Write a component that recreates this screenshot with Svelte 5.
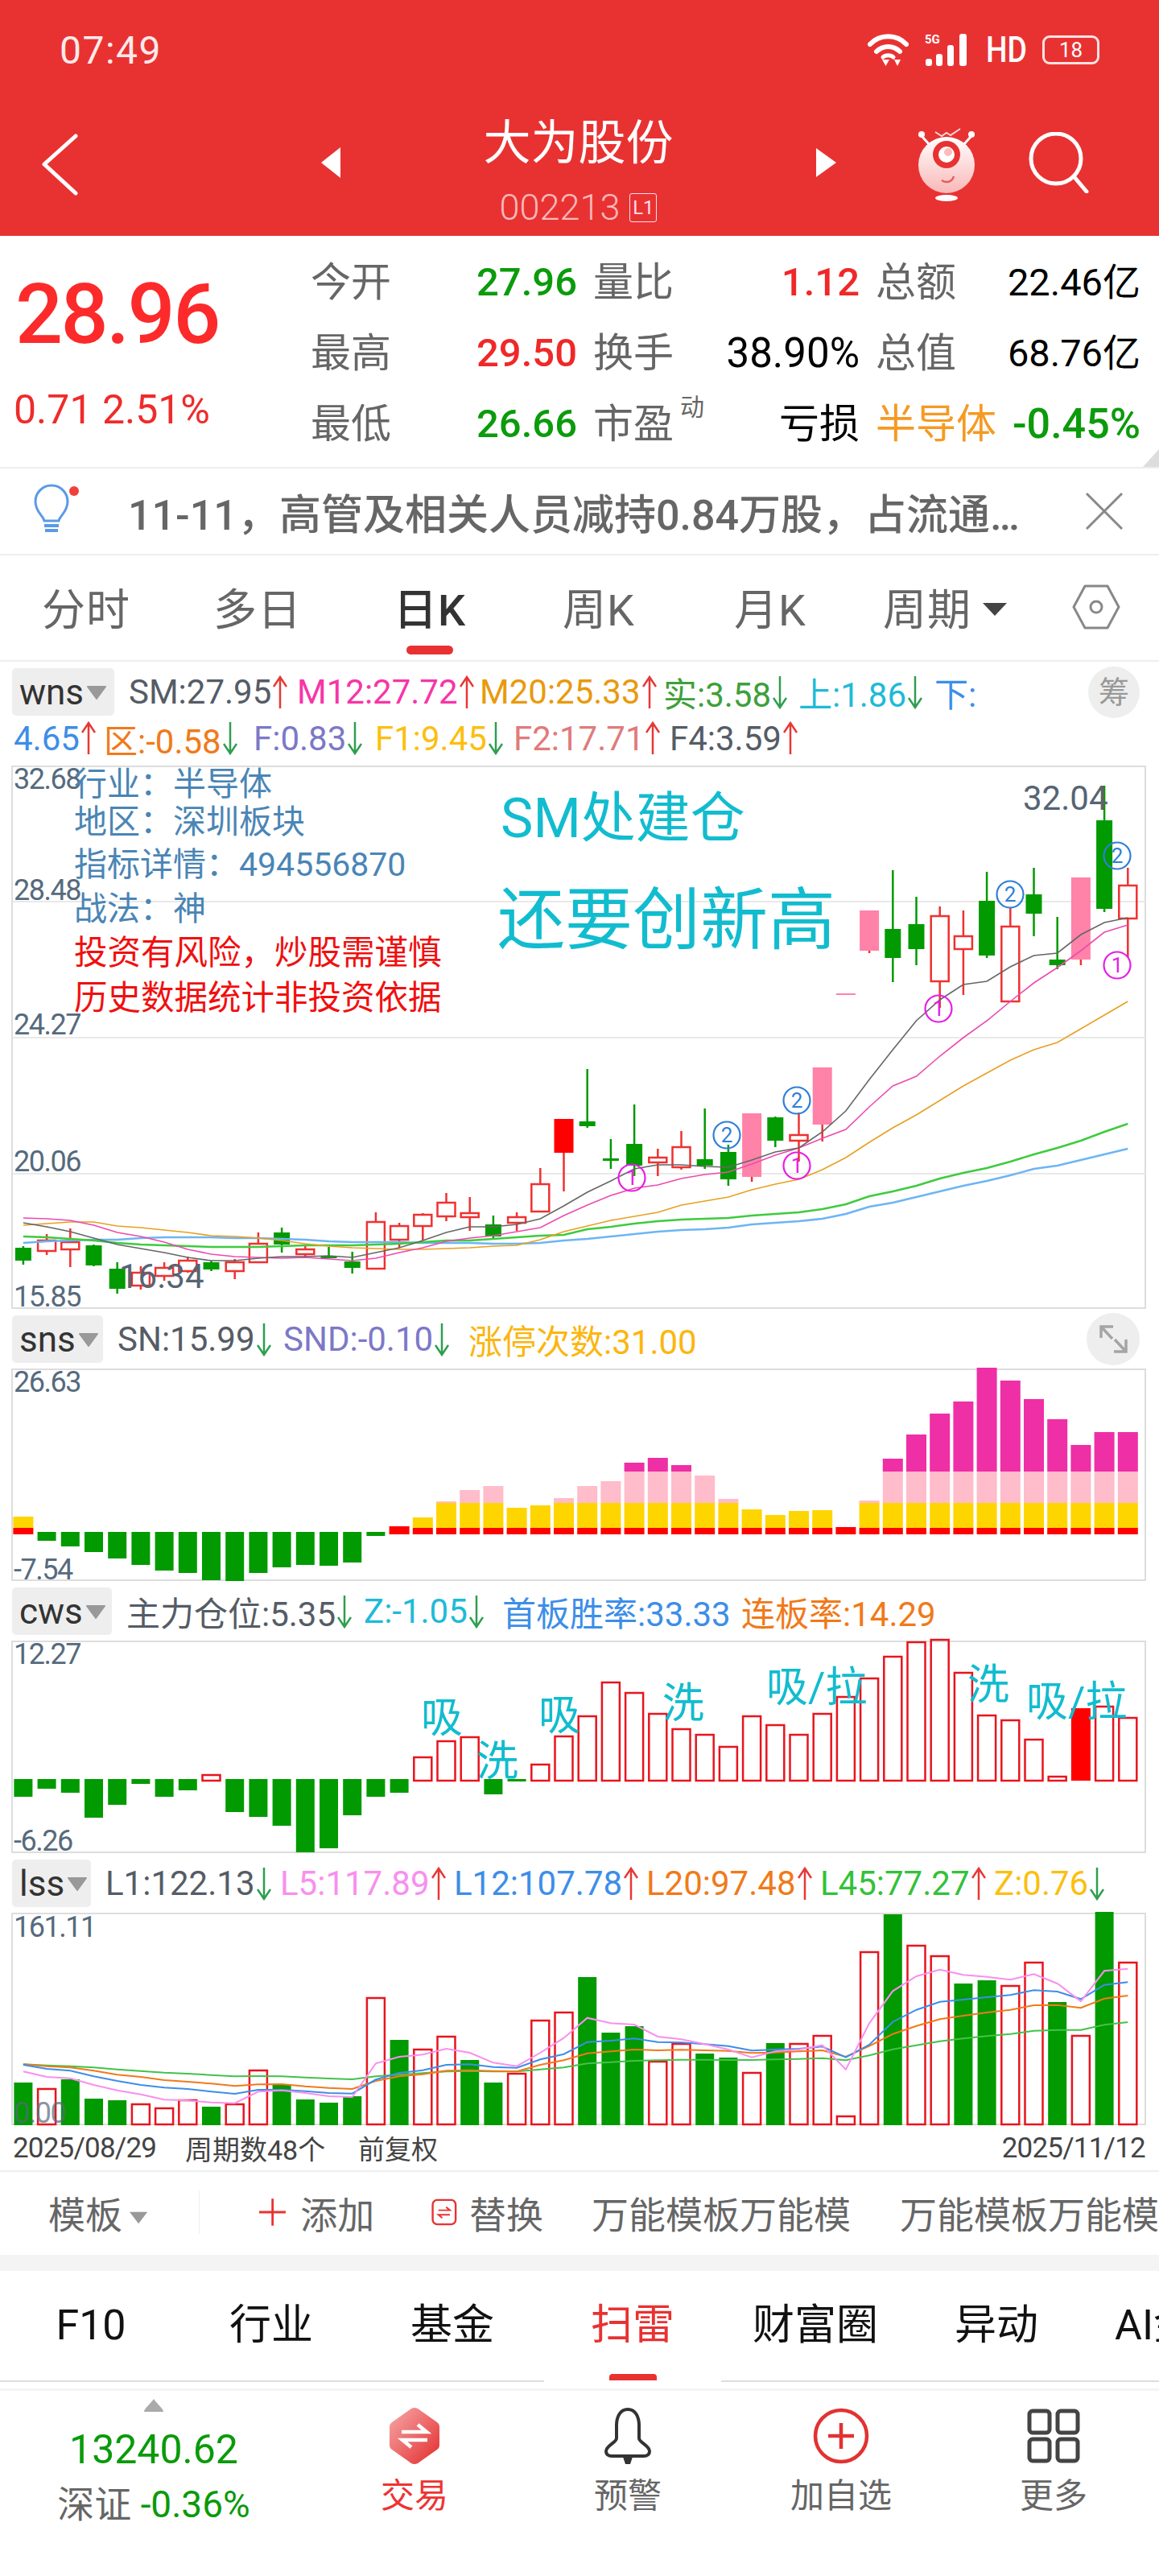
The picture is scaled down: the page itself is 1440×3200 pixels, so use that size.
<script>
  // Stock detail screen: daily K-line chart with three indicator panes below it.
  // All chart data is in page pixels, each svg's viewBox starts at its own top.
  const cx = (i) => 28.9 + i * 29.2;
  const pts = (ys) => ys.map((y, i) => `${cx(i).toFixed(1)},${y.toFixed(1)}`).join(" ");

  // kind, body top, body bottom, wick top, wick bottom
  // g = green, r = hollow red, p = pink, f = filled red
  const candles = [
    ["g",1552,1568,1550,1573],["r",1543,1556,1535,1561],["r",1545,1554,1528,1576],["g",1549,1574,1548,1575],
    ["g",1578,1603,1570,1609],["r",1583,1599,1575,1604],["r",1577,1587,1570,1593],["r",1568,1581,1563,1583],
    ["g",1570,1579,1568,1581],["r",1570,1581,1566,1591],["r",1547,1570,1533,1571],["g",1533,1548,1527,1558],
    ["r",1554,1560,1548,1563],["g",1562,1565,1551,1565],["g",1569,1577,1557,1584],["r",1520,1578,1508,1578],
    ["r",1525,1542,1521,1552],["r",1511,1525,1509,1543],["r",1496,1513,1484,1519],["r",1509,1514,1489,1531],
    ["g",1523,1538,1512,1542],["r",1514,1521,1508,1531],["r",1473,1507,1453,1508],["f",1392,1434,1392,1482],
    ["g",1395,1401,1330,1403],["g",1441,1444,1417,1454],["g",1423,1450,1374,1463],["r",1440,1446,1429,1463],
    ["r",1427,1452,1407,1455],["g",1442,1450,1379,1454],["g",1433,1467,1424,1475],["p",1385,1464,1385,1470],
    ["g",1390,1419,1389,1427],["r",1412,1419,1384,1445],["p",1328,1399,1328,1420],["p",1236,1238,1236,1238],
    ["p",1133,1183,1133,1186],["g",1156,1192,1083,1222],["g",1150,1181,1116,1201],["r",1140,1221,1128,1254],
    ["r",1165,1181,1133,1238],["g",1121,1189,1085,1192],["r",1153,1246,1129,1246],["g",1113,1137,1080,1165],
    ["g",1194,1201,1141,1206],["p",1092,1194,1092,1201],["g",1021,1131,978,1135],["r",1102,1143,1080,1191],
  ];
  const bodyW = { g: 20, r: 22, p: 24, f: 24 };
  const bodyC = { g: "#019a01", r: "#ef3131", p: "#ff82a8", f: "#ff0000" };

  const maLines = [
    { c: "#6cb5f5", w: 2.5, ys: [1546,1544,1543,1542,1542,1540,1539,1539,1539,1540,1540,1541,1542,1544,1545,1545,1545,1546,1546,1546,1547,1547,1546,1543,1541,1538,1535,1532,1530,1529,1527,1523,1521,1519,1516,1510,1501,1496,1489,1482,1475,1469,1462,1454,1450,1443,1436,1429] },
    { c: "#3ecb3e", w: 2.5, ys: [1538,1539,1541,1543,1546,1548,1549,1550,1551,1551,1551,1550,1549,1549,1549,1548,1547,1545,1543,1543,1541,1539,1537,1536,1529,1526,1522,1519,1517,1516,1515,1512,1510,1508,1504,1498,1488,1482,1475,1466,1459,1453,1445,1436,1428,1419,1408,1398] },
    { c: "#e8a020", w: 1.6, ys: [1524,1522,1520,1520,1525,1527,1530,1533,1537,1538,1540,1543,1547,1550,1552,1553,1554,1554,1553,1552,1550,1549,1542,1532,1525,1518,1513,1508,1499,1494,1489,1480,1473,1467,1455,1440,1421,1403,1387,1369,1351,1335,1319,1306,1297,1280,1263,1246] },
    { c: "#ec4bb0", w: 1.6, ys: [1515,1516,1518,1524,1533,1538,1545,1554,1560,1563,1564,1565,1564,1566,1568,1565,1558,1552,1544,1540,1537,1532,1527,1512,1499,1487,1478,1474,1466,1461,1458,1448,1437,1428,1416,1405,1377,1351,1339,1314,1291,1270,1246,1223,1204,1183,1160,1151] },
    { c: "#666666", w: 1.6, ys: [1521,1526,1532,1540,1548,1553,1558,1564,1568,1568,1565,1563,1563,1562,1564,1558,1552,1543,1533,1526,1526,1523,1516,1500,1483,1469,1454,1449,1449,1451,1452,1443,1433,1428,1408,1382,1343,1306,1270,1244,1225,1221,1203,1189,1186,1163,1148,1142] },
  ];

  const marks = [
    { n: "1", x: 785, y: 1465, c: "#e61ee6" }, { n: "1", x: 990, y: 1450, c: "#e61ee6" },
    { n: "1", x: 1166, y: 1255, c: "#e61ee6" }, { n: "1", x: 1388, y: 1201, c: "#e61ee6" },
    { n: "2", x: 903, y: 1412, c: "#2e7fd8" }, { n: "2", x: 990, y: 1369, c: "#2e7fd8" },
    { n: "2", x: 1255, y: 1113, c: "#2e7fd8" }, { n: "2", x: 1388, y: 1065, c: "#2e7fd8" },
  ];

  // sns pane: stacked levels, value is the top of the column
  const snsTops = [1885,0,0,0,0,0,0,0,0,0,0,0,0,0,0,0,1897,1886,1866,1852,1847,1874,1871,1862,1847,1841,1818,1812,1821,1834,1863,1876,1883,1878,1877,1898,1865,1813,1783,1757,1742,1700,1716,1739,1764,1796,1780,1780];
  const snsDown = { 1:1915,2:1922,3:1929,4:1937,5:1945,6:1952,7:1955,8:1964,9:1965,10:1955,11:1948,12:1945,13:1946,14:1942,15:1909 };
  function stack(t) {
    if (t >= 1890) return [{ y: t, b: 1907, c: "#ff0000" }];
    const out = [{ y: 1899, b: 1907, c: "#ff0000" }, { y: Math.max(t, 1868), b: 1899, c: "#ffd500" }];
    if (t < 1868) out.push({ y: Math.max(t, 1829), b: 1868, c: "#ffbccb" });
    if (t < 1829) out.push({ y: t, b: 1829, c: "#ee2fa5" });
    return out;
  }

  // cws pane: above zero is hollow red, below zero is green
  const cws = [2233,2223,2228,2259,2243,2217,2233,2225,2206,2252,2258,2269,2302,2297,2256,2233,2228,2184,2164,2159,2230,2214,2193,2158,2133,2091,2104,2130,2149,2156,2171,2133,2144,2156,2130,2109,2086,2059,2041,2038,2079,2132,2138,2162,2208,2123,2121,2135];
  const cwsNotes = [
    { t: "吸", x: 523, y: 2153 }, { t: "洗", x: 592, y: 2207 }, { t: "吸", x: 669, y: 2150 },
    { t: "洗", x: 823, y: 2135 }, { t: "吸/拉", x: 952, y: 2115 }, { t: "洗", x: 1202, y: 2112 },
    { t: "吸/拉", x: 1275, y: 2133 },
  ];

  // lss pane
  const lssKinds = "GRGGGRRRGRRGGGGRGRRGGRRRGGGRRGGRGRRRRGRRGGRRGRGR";
  const lssTops = [2587,2595,2583,2607,2609,2614,2619,2609,2617,2614,2572,2589,2608,2612,2604,2482,2534,2546,2530,2559,2587,2576,2510,2500,2456,2525,2517,2561,2539,2551,2556,2575,2538,2539,2529,2629,2425,2378,2417,2430,2464,2460,2467,2438,2487,2529,2375,2438];
  const lssY = (v) => 2300 + v / 3;
  const lssLines = [
    { c: "#43c24a", ys: [793,797,800,805,812,818,824,828,833,838,837,838,842,846,849,838,832,826,820,818,820,820,812,805,790,785,780,778,776,776,777,777,775,773,770,778,760,737,722,707,697,688,680,668,665,665,646,636].map(lssY) },
    { c: "#f07a1a", ys: [793,800,805,817,832,840,852,858,865,874,868,867,875,881,885,855,838,830,817,815,818,820,795,778,752,745,738,741,739,741,743,751,749,745,741,765,725,680,650,625,612,600,590,573,572,583,548,537].map(lssY) },
    { c: "#3d8ee8", ys: [795,810,817,838,855,870,880,885,895,903,888,888,893,900,902,850,825,815,795,793,803,806,775,755,710,705,697,710,712,718,725,742,738,735,727,767,720,635,590,560,552,543,535,517,522,550,497,487].map(lssY) },
    { c: "#f98fee", ys: [820,840,845,870,890,905,925,928,935,938,895,890,900,912,915,790,765,757,735,750,787,800,750,695,620,640,645,690,700,718,738,767,745,738,722,812,640,520,465,440,460,467,478,457,492,558,445,437].map(lssY) },
  ];

  const wnsRow1 = [
    { t: "SM:27.95", c: "#555c66", w: 209, a: "up" }, { t: "M12:27.72", c: "#f735a8", w: 227, a: "up" },
    { t: "M20:25.33", c: "#e89a0c", w: 228, a: "up" }, { t: "实:3.58", c: "#3ea03a", w: 168, a: "down" },
    { t: "上:1.86", c: "#1ebbd7", w: 169, a: "down" }, { t: "下:", c: "#3d8ee8" },
  ];
  const wnsRow2 = [
    { t: "4.65", c: "#3d8ee8", w: 112, a: "up" }, { t: "区:-0.58", c: "#f07a1a", w: 186, a: "down" },
    { t: "F:0.83", c: "#7c78c8", w: 151, a: "down" }, { t: "F1:9.45", c: "#fbbf0f", w: 172, a: "down" },
    { t: "F2:17.71", c: "#e07b7b", w: 194, a: "up" }, { t: "F4:3.59", c: "#555c66", a: "up" },
  ];
  const snsRow = [
    { t: "SN:15.99", c: "#555c66", w: 206, a: "down" }, { t: "SND:-0.10", c: "#7c78c8", w: 230, a: "down" },
    { t: "涨停次数:31.00", c: "#fbb60f" },
  ];
  const cwsRow = [
    { t: "主力仓位:5.35", c: "#555c66", w: 295, a: "down" }, { t: "Z:-1.05", c: "#1ebbd7", w: 172, a: "down" },
    { t: "首板胜率:33.33", c: "#3d8ee8", w: 297 }, { t: "连板率:14.29", c: "#f07a1a" },
  ];
  const lssRow = [
    { t: "L1:122.13", c: "#555c66", w: 217, a: "down" }, { t: "L5:117.89", c: "#f98fee", w: 216, a: "up" },
    { t: "L12:107.78", c: "#3d8ee8", w: 239, a: "up" }, { t: "L20:97.48", c: "#f07a1a", w: 216, a: "up" },
    { t: "L45:77.27", c: "#33c13a", w: 216, a: "up" }, { t: "Z:0.76", c: "#fbbf0f", a: "down" },
  ];

  const periodTabs = ["分时", "多日", "日K", "周K", "月K"];
  const lowerTabs = ["F10", "行业", "基金", "扫雷", "财富圈", "异动"];
</script>

{#snippet legend(items)}
  {#each items as it}
    <span class="item" style:color={it.c} style:width={it.w ? it.w + "px" : null}>
      {it.t}
      {#if it.a === "up"}
        <svg class="arr" viewBox="0 0 18 42"><path d="M9 41V2M1 14L9 2l8 12" stroke="#e53935" /></svg>
      {:else if it.a === "down"}
        <svg class="arr" viewBox="0 0 18 42"><path d="M9 1v39M1 28l8 12 8-12" stroke="#2e9e4f" /></svg>
      {/if}
    </span>
  {/each}
{/snippet}

{#snippet selector(name, width)}
  <span class="sel" style:width={width + "px"}>
    {name}
    <svg class="sel-tri" viewBox="0 0 26 18"><path d="M2 2h22L13 17z" fill="#999" stroke="#999" stroke-width="2" stroke-linejoin="round" /></svg>
  </span>
{/snippet}

<div class="page">
  <header class="top">
    <div class="status">
      <span class="clock">07:49</span>
      <div class="status-icons">
        <svg width="51" height="42" viewBox="0 0 51 42" fill="none" stroke="#fff" stroke-linecap="round">
          <path d="M3 14C15 1 36 1 48 14" stroke-width="6" />
          <path d="M11 23c8-8 21-8 29 0" stroke-width="6" />
          <path d="M19 30c3-3 10-3 13 0" stroke-width="5" />
          <path d="M18 33h9l-4.500 8z" fill="#fff" stroke="none" />
          <path d="M33 33h8l-4 8z" fill="#fff" stroke="none" />
        </svg>
        <div class="signal">
          <span class="five-g">5G</span>
          <svg width="53" height="40" viewBox="0 0 53 40" fill="#fff">
            <rect x="1" y="31" width="8" height="9" rx="3" /><rect x="14" y="25" width="8" height="15" rx="3" />
            <rect x="28" y="14" width="8" height="26" rx="3" /><rect x="43" y="0" width="9" height="40" rx="3" />
          </svg>
        </div>
        <span class="hd">HD</span>
        <div class="battery"><span>18</span></div>
      </div>
    </div>
    <div class="nav">
      <svg class="back" width="46" height="78" viewBox="0 0 46 78" fill="none" stroke="#fff" stroke-width="5" stroke-linecap="round" stroke-linejoin="round">
        <path d="M42 4L3 39l39 36" />
      </svg>
      <svg class="prev" width="24" height="38" viewBox="0 0 24 38"><path d="M24 0v38L0 19z" fill="#fff" /></svg>
      <div class="title">
        <div class="name">大为股份</div>
        <div class="code">002213<span class="lvl">L1</span></div>
      </div>
      <svg class="next" width="25" height="36" viewBox="0 0 25 36"><path d="M0 0v36l25-18z" fill="#fff" /></svg>
      <svg class="robot" width="72" height="92" viewBox="0 0 72 92">
        <defs>
          <linearGradient id="robotBody" x1="0" y1="0" x2="0" y2="1">
            <stop offset="0" stop-color="#fff" /><stop offset="1" stop-color="#f9b7b7" />
          </linearGradient>
        </defs>
        <path d="M22 6l8 5 6-4 5 3 12-8" fill="none" stroke="#fff" stroke-width="2" opacity="0.8" />
        <circle cx="5" cy="9" r="4" fill="#fff" /><circle cx="67" cy="9" r="4" fill="#fff" />
        <path d="M6 12l9 10M66 12l-9 10" stroke="#fff" stroke-width="3" />
        <ellipse cx="36" cy="47" rx="35" ry="35" fill="url(#robotBody)" />
        <circle cx="36" cy="34" r="17" fill="#e83232" /><circle cx="36" cy="34" r="10" fill="#fff" /><circle cx="38" cy="31" r="5" fill="#fbb" />
        <path d="M30 66c6 4 13 2 15-5" fill="none" stroke="#e85a5a" stroke-width="2.5" />
        <ellipse cx="36" cy="88" rx="14" ry="4" fill="#fff" />
      </svg>
      <svg class="search" width="76" height="76" viewBox="0 0 76 76" fill="none" stroke="#fff" stroke-width="5" stroke-linecap="round">
        <circle cx="35" cy="33" r="31" /><path d="M57 55l16 19" />
      </svg>
    </div>
  </header>

  <section class="stats">
    <div class="price">
      <div class="last">28.96</div>
      <div class="chg">0.71 2.51%</div>
    </div>
    <div class="table">
      <span class="lab">今开</span><span class="val green">27.96</span><span class="lab">量比</span><span class="val r red">1.12</span><span class="lab pl">总额</span><span class="val r sm">22.46亿</span>
      <span class="lab">最高</span><span class="val red">29.50</span><span class="lab">换手</span><span class="val r turn">38.90%</span><span class="lab pl">总值</span><span class="val r sm">68.76亿</span>
      <span class="lab">最低</span><span class="val green">26.66</span><span class="lab">市盈<sup>动</sup></span><span class="val r blk">亏损</span><span class="lab pl org">半导体</span><span class="val r green wide">-0.45%</span>
    </div>
    <i class="corner"></i>
  </section>

  <div class="notice">
    <svg class="bulb" width="62" height="68" viewBox="0 0 62 68" fill="none" stroke="#5a9ae8" stroke-width="3">
      <path d="M13 46c-1-6-11-11-11-24a20 20 0 0 1 40 0c0 13-10 18-11 24z" />
      <path d="M13 52h18M14 58h16" stroke-width="4" />
      <circle cx="50" cy="9" r="6" fill="#f0403c" stroke="none" />
    </svg>
    <span class="notice-text">11-11，高管及相关人员减持0.84万股，占流通…</span>
    <svg class="close" width="48" height="48" viewBox="0 0 48 48" stroke="#888" stroke-width="3"><path d="M2 2l44 44M46 2L2 46" /></svg>
  </div>

  <nav class="periods">
    {#each periodTabs as tab, i}
      <div class="period" class:on={i === 2}>
        <span>{tab}</span>
        {#if i === 2}<i class="bar"></i>{/if}
      </div>
    {/each}
    <div class="period cycle"><span>周期<svg width="30" height="16" viewBox="0 0 30 16" class="period-tri"><path d="M0 0h30L15 16z" fill="#444" /></svg></span></div>
    <div class="period hex">
      <svg width="60" height="58" viewBox="0 0 60 58" fill="none" stroke="#888" stroke-width="3" stroke-linejoin="round">
        <path d="M16 3h28l14 26-14 26H16L2 29z" /><circle cx="30" cy="29" r="7" />
      </svg>
    </div>
  </nav>

  <!-- main chart -->
  <section class="pane">
    <div class="legend">
      {@render selector("wns", 127)}
      {@render legend(wnsRow1)}
      <span class="round">筹</span>
    </div>
    <div class="legend second">{@render legend(wnsRow2)}</div>
    <svg class="plot" width="1440" height="675" viewBox="0 953 1440 675">
      <rect x="15" y="954" width="1408" height="673" class="frame" />
      {#each [1122, 1291, 1460] as y}<line x1="15" x2="1423" y1={y} y2={y} class="grid" />{/each}

      {#each candles as [k, top, bot, hi, lo], i}
        {@const x = cx(i)}
        {#if k === "r"}
          <line x1={x} x2={x} y1={hi} y2={top} stroke={bodyC[k]} stroke-width="2.5" />
          <line x1={x} x2={x} y1={bot} y2={lo} stroke={bodyC[k]} stroke-width="2.5" />
          <rect x={x - 11} y={top} width="22" height={bot - top} fill="none" stroke={bodyC[k]} stroke-width="2.5" />
        {:else}
          <line x1={x} x2={x} y1={hi} y2={lo} stroke={k === "g" ? "#019a01" : "#ef3131"} stroke-width="2.5" />
          <rect x={x - bodyW[k] / 2} y={top} width={bodyW[k]} height={bot - top} fill={bodyC[k]} />
        {/if}
      {/each}
      {#each maLines as l}
        <polyline points={pts(l.ys)} fill="none" stroke={l.c} stroke-width={l.w} />
      {/each}
      {#each marks as m}
        <circle cx={m.x} cy={m.y} r="16.5" fill="none" stroke={m.c} stroke-width="2.2" />
        <text x={m.x} y={m.y + 9} text-anchor="middle" class="mark" fill={m.c}>{m.n}</text>
      {/each}

      <text x="17" y="982" class="axis">32.68</text>
      <text x="17" y="1120" class="axis">28.48</text>
      <text x="17" y="1287" class="axis">24.27</text>
      <text x="17" y="1457" class="axis">20.06</text>
      <text x="17" y="1625" class="axis">15.85</text>
      <text x="148" y="1602" class="peak">16.34</text>
      <text x="1271" y="1008" class="peak">32.04</text>

      <text x="92" y="990" class="info">行业：半导体</text>
      <text x="92" y="1037" class="info">地区：深圳板块</text>
      <text x="92" y="1090" class="info">指标详情：494556870</text>
      <text x="92" y="1145" class="info">战法：神</text>
      <text x="92" y="1200" class="warn">投资有风险，炒股需谨慎</text>
      <text x="92" y="1256" class="warn">历史数据统计非投资依据</text>
      <text x="622" y="1042" class="note-a">SM处建仓</text>
      <text x="618" y="1174" class="note-b">还要创新高</text>
    </svg>
  </section>

  <!-- sns pane -->
  <section class="pane">
    <div class="legend">
      {@render selector("sns", 113)}
      {@render legend(snsRow)}
      <span class="round expand">
        <svg width="66" height="65" viewBox="0 0 66 65" fill="none" stroke="#a5a5a5" stroke-width="3.5">
          <path d="M18 31V17h15M18 17l14 15M49 33v15H34M49 48L35 33" />
        </svg>
      </span>
    </div>
    <svg class="plot" width="1440" height="264" viewBox="0 1701 1440 264">
      <rect x="15" y="1702" width="1408" height="262" class="frame" />
      {#each snsTops as t, i}
        {#if t}
          {#each stack(t) as s}
            <rect x={cx(i) - 12.5} y={s.y} width="25" height={s.b - s.y} fill={s.c} />
          {/each}
        {:else}
          <rect x={cx(i) - 11.5} y="1904" width="23" height={snsDown[i] - 1904} fill="#019a01" />
        {/if}
      {/each}
      <text x="17" y="1730" class="axis">26.63</text>
      <text x="17" y="1963" class="axis">-7.54</text>
    </svg>
  </section>

  <!-- cws pane -->
  <section class="pane">
    <div class="legend">
      {@render selector("cws", 124)}
      {@render legend(cwsRow)}
    </div>
    <svg class="plot" width="1440" height="264" viewBox="0 2039 1440 264">
      <rect x="15" y="2040" width="1408" height="262" class="frame" />
      {#each cws as y, i}
        {#if i === 45}
          <rect x={cx(i) - 12} y={y} width="24" height={2213 - y} fill="#ff0000" />
        {:else if y < 2211}
          <rect x={cx(i) - 11} y={y} width="22" height={2213 - y} fill="none" stroke="#e8141e" stroke-width="2.5" />
        {:else}
          <rect x={cx(i) - 11.5} y="2211" width="23" height={y - 2211} fill="#019a01" />
        {/if}
      {/each}
      {#each cwsNotes as n}<text x={n.x} y={n.y} class="note-c">{n.t}</text>{/each}
      <text x="17" y="2068" class="axis">12.27</text>
      <text x="17" y="2300" class="axis">-6.26</text>
    </svg>
  </section>

  <!-- lss pane -->
  <section class="pane">
    <div class="legend">
      {@render selector("lss", 98)}
      {@render legend(lssRow)}
    </div>
    <svg class="plot" width="1440" height="264" viewBox="0 2376 1440 264">
      <rect x="15" y="2377" width="1408" height="262" class="frame" />
      {#each lssTops as y, i}
        {#if lssKinds[i] === "G"}
          <rect x={cx(i) - 11.5} y={y} width="23" height={2640 - y} fill="#019a01" />
        {:else}
          <rect x={cx(i) - 11} y={y} width="22" height={2639 - y} fill="none" stroke="#e8141e" stroke-width="2.5" />
        {/if}
      {/each}
      {#each lssLines as l}
        <polyline points={pts(l.ys)} fill="none" stroke={l.c} stroke-width="2" />
      {/each}
      <text x="17" y="2406" class="axis">161.11</text>
      <text x="17" y="2637" class="axis faint">0.00</text>
    </svg>
    <div class="range">
      <span class="from">2025/08/29</span>
      <span class="count">周期数48个</span>
      <span class="adj">前复权</span>
      <span class="to">2025/11/12</span>
    </div>
  </section>

  <div class="tools">
    <span class="tpl">模板</span>
    <svg class="tpl-tri" width="28" height="18" viewBox="0 0 28 18"><path d="M0 0h28L14 18z" fill="#999" /></svg>
    <i class="tools-sep"></i>
    <svg class="plus" width="42" height="42" viewBox="0 0 42 42" stroke="#e83232" stroke-width="3.5"><path d="M21 0v42M0 21h42" /></svg>
    <span class="tool-add">添加</span>
    <svg class="swap" width="40" height="42" viewBox="0 0 40 42" fill="none" stroke="#e83232" stroke-width="3">
      <rect x="2" y="2" width="36" height="38" rx="7" /><path d="M11 18h18l-6-5M29 25H11l6 5" stroke-width="2.5" />
    </svg>
    <span class="tool-swap">替换</span>
    <span class="tool-tpl">万能模板万能模</span>
    <span class="tool-tpl2">万能模板万能模</span>
  </div>

  <nav class="subtabs">
    {#each lowerTabs as tab, i}
      <div class="subtab" class:on={i === 3}>
        <span>{tab}</span>
        {#if i === 3}<i class="subbar"></i>{/if}
      </div>
    {/each}
    <div class="subtab ai"><span>AI金</span></div>
  </nav>

  <footer class="dock">
    <div class="index">
      <svg width="24" height="16" viewBox="0 0 24 16"><path d="M12 0c3 5 12 12 12 16H0C0 12 9 5 12 0z" fill="#aaa" /></svg>
      <div class="idx-val">13240.62</div>
      <div class="idx-sub">深证 <b>-0.36%</b></div>
    </div>
    <div class="dock-item active">
      <svg width="64" height="72" viewBox="0 0 64 72">
        <defs>
          <linearGradient id="tradeFill" x1="0" y1="0" x2="1" y2="1">
            <stop offset="0" stop-color="#f7a9a9" /><stop offset="1" stop-color="#e32c2c" />
          </linearGradient>
        </defs>
        <path d="M28 2q4-2 8 0l24 17q3 2 3 6v22q0 4-3 6L36 70q-4 2-8 0L4 53q-3-2-3-6V25q0-4 3-6z" fill="url(#tradeFill)" />
        <path d="M16 31h31l-11-9M48 41H17l11 9" fill="none" stroke="#fff" stroke-width="4.5" />
      </svg>
      <span>交易</span>
    </div>
    <div class="dock-item">
      <svg width="60" height="72" viewBox="0 0 60 72" fill="none" stroke="#333" stroke-width="4" stroke-linejoin="round">
        <path d="M30 3c-10 0-14 10-14 20v16c0 5-13 9-13 16 0 4 3 6 7 6h40c4 0 7-2 7-6 0-7-13-11-13-16V23c0-10-4-20-14-20z" />
        <path d="M24 62h12l-3 9h-6z" fill="#333" stroke="none" />
      </svg>
      <span>预警</span>
    </div>
    <div class="dock-item">
      <svg width="72" height="72" viewBox="0 0 72 72" fill="none" stroke="#e23232" stroke-width="4.5">
        <circle cx="36" cy="36" r="32" /><path d="M36 20v32M20 36h32" />
      </svg>
      <span>加自选</span>
    </div>
    <div class="dock-item">
      <svg width="66" height="68" viewBox="0 0 66 68" fill="none" stroke="#444" stroke-width="5">
        <rect x="3" y="3" width="25" height="27" rx="4" /><rect x="38" y="3" width="25" height="27" rx="4" />
        <rect x="3" y="38" width="25" height="27" rx="4" /><rect x="38" y="38" width="25" height="27" rx="4" />
      </svg>
      <span>更多</span>
    </div>
  </footer>
</div>

<style>
  :global(body) {
    margin: 0;
    background: #fff;
  }
  .page {
    width: 1440px;
    height: 3200px;
    overflow: hidden;
    background: #fff;
    font-family: Roboto, "Noto Sans CJK SC", sans-serif;
    color: #333;
  }

  /* header */
  .top {
    height: 293px;
    background: #e83232;
    color: #fff;
  }
  .status {
    height: 124px;
    display: flex;
    align-items: center;
    padding: 0 74px;
    box-sizing: border-box;
    justify-content: space-between;
  }
  .clock {
    font-size: 48px;
    letter-spacing: 1.5px;
    color: #fdeaea;
  }
  .status-icons {
    display: flex;
    align-items: center;
  }
  .signal {
    position: relative;
    width: 53px;
    height: 40px;
    margin-left: 20px;
  }
  .five-g {
    position: absolute;
    left: 0;
    top: -3px;
    font-size: 15px;
    font-weight: 700;
    line-height: 20px;
  }
  .hd {
    margin-left: 23px;
    font-size: 44px;
    font-weight: 500;
    line-height: 40px;
    transform: scaleX(0.85);
    transform-origin: left;
    width: 44px;
  }
  .battery {
    margin-left: 26px;
    width: 71px;
    height: 36px;
    box-sizing: border-box;
    border: 3px solid #fde2e2;
    border-radius: 9px;
    display: flex;
    align-items: center;
    justify-content: center;
  }
  .battery span {
    font-size: 26px;
    line-height: 30px;
  }
  .nav {
    height: 169px;
    display: flex;
    align-items: flex-start;
  }
  .back {
    margin: 41px 0 0 52px;
  }
  .prev {
    margin: 59px 0 0 301px;
  }
  .title {
    width: 591px;
    display: flex;
    flex-direction: column;
    align-items: center;
    text-align: center;
  }
  .name {
    width: 100%;
    padding-top: 24px;
    font-size: 59px;
    line-height: 60px;
  }
  .code {
    margin-top: 28px;
    font-size: 45px;
    line-height: 44px;
    color: #fbb9b9;
    display: flex;
    align-items: center;
    gap: 12px;
    font-weight: 300;
  }
  .lvl {
    font-size: 24px;
    line-height: 34px;
    width: 32px;
    border: 1.5px solid #fde;
    border-radius: 3px;
    color: #fde;
    font-weight: 400;
  }
  .next {
    margin-top: 60px;
  }
  .robot {
    margin: 34px 0 0 101px;
  }
  .search {
    margin: 40px 0 0 65px;
  }

  /* quote */
  .stats {
    height: 287px;
    display: flex;
    position: relative;
    box-sizing: border-box;
  }
  .price {
    width: 386px;
    padding-left: 19px;
    box-sizing: border-box;
  }
  .last {
    margin-top: 48px;
    font-size: 104px;
    line-height: 100px;
    font-weight: 500;
    letter-spacing: -2.5px;
    color: #fc2a2a;
  }
  .chg {
    margin-top: 40px;
    font-size: 50px;
    line-height: 56px;
    color: #ef2b2b;
    margin-left: -2px;
  }
  .table {
    display: grid;
    grid-template-columns: 206px 145px 100px 231px 170px 179px;
    grid-auto-rows: 88px;
    padding-top: 14px;
    align-items: center;
    white-space: nowrap;
  }
  .lab {
    font-size: 50px;
    color: #666;
    line-height: 60px;
  }
  .lab sup {
    font-size: 30px;
    line-height: 0;
    vertical-align: 28px;
    margin-left: 8px;
  }
  .pl {
    padding-left: 20px;
  }
  .org {
    color: #f59a23;
  }
  .val {
    font-size: 49px;
    line-height: 60px;
    font-weight: 500;
  }
  .val.sm {
    font-size: 47px;
    color: #000;
    font-weight: 400;
  }
  .val.turn {
    font-size: 51px;
    color: #000;
    font-weight: 400;
  }
  .val.blk {
    font-size: 50px;
    color: #000;
    font-weight: 400;
  }
  .val.wide {
    font-size: 52px;
  }
  .r {
    text-align: right;
  }
  .green {
    color: #0b9b0b;
  }
  .red {
    color: #f02828;
  }
  .corner {
    position: absolute;
    right: 0;
    bottom: 0;
    border-style: solid;
    border-width: 0 0 22px 20px;
    border-color: transparent transparent #ddd transparent;
  }

  .notice {
    height: 110px;
    border-top: 2px solid #eee;
    border-bottom: 2px solid #eee;
    box-sizing: border-box;
    display: flex;
    align-items: center;
    overflow: hidden;
  }
  .bulb {
    margin: 0 0 0 42px;
  }
  .notice-text {
    margin-left: 55px;
    width: 1128px;
    font-size: 52px;
    font-weight: 500;
    color: #666;
    white-space: nowrap;
  }
  .close {
    margin-left: 61px;
  }

  .periods {
    height: 130px;
    display: grid;
    grid-template-columns: 214px 212px 216px 204px 222px 184px 188px;
    border-bottom: 2px solid #eee;
    box-sizing: content-box;
  }
  .period {
    display: flex;
    flex-direction: column;
    align-items: center;
    padding-top: 39px;
    font-size: 54px;
    line-height: 60px;
    letter-spacing: 1px;
    color: #666;
    white-space: nowrap;
  }
  .period.on {
    color: #333;
    font-weight: 500;
  }
  .period.cycle {
    align-items: flex-start;
    padding-left: 29px;
  }
  .period-tri {
    margin-left: 14px;
    vertical-align: 12px;
  }
  .period.hex {
    padding-top: 35px;
    padding-left: 32px;
    box-sizing: border-box;
  }
  .bar {
    margin-top: 13px;
    width: 58px;
    height: 11px;
    border-radius: 6px;
    background: #e83232;
  }

  /* indicator panes */
  .pane {
    padding-top: 8px;
    position: relative;
  }
  .legend {
    height: 59px;
    display: flex;
    align-items: center;
    white-space: nowrap;
    font-size: 42px;
    margin-bottom: 7px;
  }
  .legend.second {
    height: 48px;
    margin-bottom: 10px;
    padding-left: 17px;
    margin-top: -3px;
  }
  .sel {
    margin-left: 15px;
    margin-right: 18px;
    height: 59px;
    background: #eee;
    border-radius: 5px;
    box-sizing: border-box;
    padding-left: 9px;
    display: flex;
    align-items: center;
    gap: 3px;
    font-size: 44px;
    color: #333;
    flex: none;
  }
  .sel-tri {
    width: 26px;
    height: 18px;
    flex: none;
  }
  .item {
    display: inline-flex;
    align-items: center;
    flex: none;
    gap: 2px;
  }
  .arr {
    width: 18px;
    height: 42px;
    flex: none;
    fill: none;
    stroke-width: 2.5;
  }
  .round {
    margin-left: auto;
    margin-right: 24px;
    width: 64px;
    height: 64px;
    border-radius: 50%;
    background: #eee;
    color: #999;
    font-size: 38px;
    line-height: 64px;
    text-align: center;
    flex: none;
  }
  .round.expand {
    width: 66px;
    height: 65px;
    display: block;
  }
  .round.expand svg {
    display: block;
  }
  .plot {
    display: block;
    overflow: visible;
  }
  .frame {
    fill: none;
    stroke: #ddd;
    stroke-width: 2;
  }
  .grid {
    stroke: #e2e2e2;
    stroke-width: 1.5;
  }
  .axis {
    font-size: 36px;
    fill: #566a7d;
    letter-spacing: -1.5px;
  }
  .axis.faint {
    opacity: 0.7;
  }
  .peak {
    font-size: 42px;
    fill: #566473;
  }
  .mark {
    font-size: 26px;
  }
  .info {
    font-size: 41px;
    fill: #4a85b5;
  }
  .warn {
    font-size: 41.5px;
    fill: #f01010;
  }
  .note-a {
    font-size: 68px;
    fill: #12bccf;
  }
  .note-b {
    font-size: 84px;
    fill: #12bccf;
  }
  .note-c {
    font-size: 52px;
    fill: #12bccf;
  }
  .range {
    height: 56px;
    display: flex;
    align-items: center;
    font-size: 35px;
    color: #444;
    white-space: nowrap;
  }
  .from {
    margin-left: 16px;
    width: 214px;
    letter-spacing: -0.8px;
  }
  .count {
    width: 215px;
    font-size: 34px;
  }
  .adj {
    font-size: 33px;
  }
  .to {
    margin-left: auto;
    margin-right: 17px;
    letter-spacing: -0.8px;
  }

  /* template bar */
  .tools {
    height: 99px;
    padding-bottom: 4px;
    border-top: 2px solid #eee;
    border-bottom: 20px solid #f4f4f4;
    box-sizing: content-box;
    display: flex;
    align-items: center;
    white-space: nowrap;
    overflow: hidden;
    font-size: 46px;
    color: #666;
  }
  .tpl {
    margin-left: 60px;
  }
  .tpl-tri {
    margin: 14px 0 0 9px;
  }
  .tools-sep {
    margin-left: 64px;
    width: 1px;
    height: 54px;
    background: #eee;
  }
  .plus {
    margin-left: 74px;
  }
  .tool-add {
    margin-left: 18px;
  }
  .swap {
    margin-left: 71px;
  }
  .tool-swap {
    margin-left: 15px;
  }
  .tool-tpl {
    margin-left: 60px;
  }
  .tool-tpl2 {
    margin-left: 61px;
  }

  .subtabs {
    height: 136px;
    display: grid;
    grid-template-columns: 226px 222px 228px 220px 234px 216px 94px;
    border-bottom: 2px solid #ddd;
    overflow: visible;
  }
  .subtab {
    display: flex;
    flex-direction: column;
    align-items: center;
    padding-top: 38px;
    font-size: 52px;
    line-height: 60px;
    color: #111;
    white-space: nowrap;
    height: 136px;
    box-sizing: border-box;
  }
  .subtab.on {
    color: #e83232;
    height: 138px;
    border-bottom: 2px solid #fff;
  }
  .subtab.ai {
    align-items: flex-start;
    padding-left: 39px;
    overflow: hidden;
  }
  .subbar {
    margin-top: 30px;
    width: 59px;
    height: 8px;
    border-radius: 4px 4px 0 0;
    background: #e83232;
  }

  .dock {
    margin-top: 8px;
    border-top: 3px solid #f4f4f4;
    display: grid;
    grid-template-columns: 382px 266px 264px 266px 262px;
  }
  .index {
    display: flex;
    flex-direction: column;
    align-items: center;
    padding-top: 10px;
  }
  .index svg {
    display: block;
  }
  .idx-val {
    margin-top: 22px;
    font-size: 50px;
    line-height: 50px;
    color: #0a9a0a;
  }
  .idx-sub {
    margin-top: 18px;
    font-size: 46px;
    line-height: 50px;
    color: #666;
    white-space: nowrap;
  }
  .idx-sub b {
    font-weight: 400;
    color: #0a9a0a;
  }
  .dock-item {
    display: flex;
    flex-direction: column;
    align-items: center;
    padding-top: 20px;
    font-size: 42px;
    color: #666;
  }
  .dock-item svg {
    display: block;
    height: 72px;
  }
  .dock-item span {
    margin-top: 16px;
    line-height: 46px;
  }
  .dock-item.active {
    color: #e33;
  }
</style>
